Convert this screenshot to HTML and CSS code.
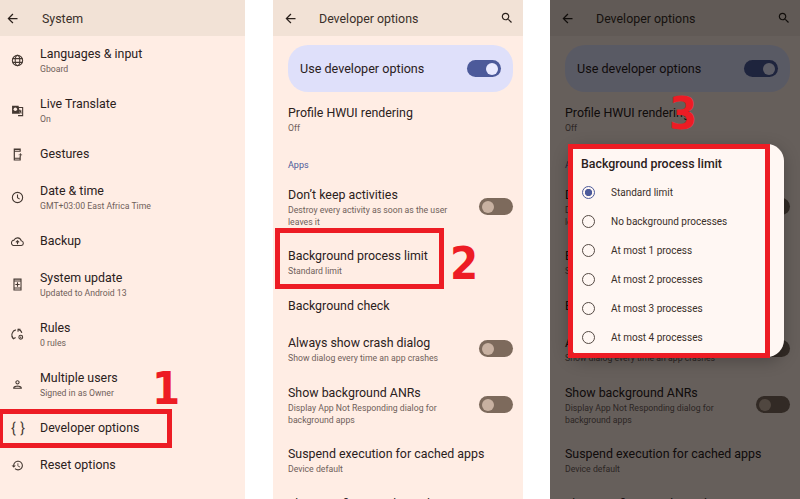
FILE: index.html
```html
<!DOCTYPE html>
<html lang="en">
<head>
<meta charset="utf-8">
<title>Developer options</title>
<link rel="stylesheet" href="styles.css">
</head>
<body>
<svg class="defs" width="0" height="0" aria-hidden="true">
  <symbol id="i-back" viewBox="0 0 24 24"><path d="M20 11H7.83l5.59-5.59L12 4l-8 8 8 8 1.41-1.41L7.83 13H20v-2z"/></symbol>
  <symbol id="i-search" viewBox="0 0 24 24"><path d="M15.5 14h-.79l-.28-.27C15.41 12.59 16 11.11 16 9.5 16 5.91 13.09 3 9.5 3S3 5.91 3 9.5 5.91 16 9.5 16c1.61 0 3.09-.59 4.23-1.57l.27.28v.79l5 4.99L20.49 19l-4.99-5zm-6 0C7.01 14 5 11.99 5 9.5S7.01 5 9.5 5 14 7.01 14 9.5 11.99 14 9.5 14z"/></symbol>
</svg>

<section class="phone phone-narrow">
  <header class="bar">
    <svg class="bar-icon"><use href="#i-back"/></svg>
    <span class="bar-title bar-title-system">System</span>
  </header>
  <div class="row row-2">
    <svg class="icon" viewBox="0 0 24 24"><g class="line"><circle cx="12" cy="12" r="9.5"/><ellipse cx="12" cy="12" rx="4.2" ry="9.5"/><path d="M3 8.5h18M3 15.5h18"/></g></svg>
    <div class="text"><div class="title">Languages &amp; input</div><div class="sub">Gboard</div></div>
  </div>
  <div class="row row-2">
    <svg class="icon" viewBox="0 0 24 24"><g class="line"><path d="M10 6.5h11.5v15H13"/><path d="M16 10.5l3 7M14.5 13h5"/></g><path d="M2 3h12l2.5 15H2z"/><circle class="cut" cx="8" cy="9.5" r="3.2"/></svg>
    <div class="text"><div class="title">Live Translate</div><div class="sub">On</div></div>
  </div>
  <div class="row row-1">
    <svg class="icon" viewBox="0 0 24 24"><path d="M5 1h13v6h-2.2V3.5H7.2V5h8.6v2H7.2v11h8.6v-3H18v8H5zM7.2 20v1h8.6v-1z"/><path d="M16.5 9.5h1.6V12h2.4v1.6h-2.4V16h-1.6v-2.4h-2.4V12h2.4z"/></svg>
    <div class="text"><div class="title">Gestures</div></div>
  </div>
  <div class="row row-2">
    <svg class="icon" viewBox="0 0 24 24"><g class="line"><circle cx="12" cy="12" r="9.5"/><path d="M12 6.5V12.5l4 2.5"/></g></svg>
    <div class="text"><div class="title">Date &amp; time</div><div class="sub">GMT+03:00 East Africa Time</div></div>
  </div>
  <div class="row row-1">
    <svg class="icon" viewBox="0 0 24 24"><g class="line"><path d="M6 19.5a5 5 0 0 1-.4-10A7 7 0 0 1 18.8 10.6a4.5 4.5 0 0 1 .2 8.9z"/><path d="M12 17v-6M9 13.5l3-3 3 3"/></g></svg>
    <div class="text"><div class="title">Backup</div></div>
  </div>
  <div class="row row-2">
    <svg class="icon" viewBox="0 0 24 24"><path d="M4.5 1h15v22h-15zM6.5 3v1.500h11V3zm0 3.500v11h11v-11zm0 13V21h11v-1.500z" fill-rule="evenodd"/><path d="M11 8h2v3h3v2h-3v3h-2v-3H8v-2h3z"/></svg>
    <div class="text"><div class="title">System update</div><div class="sub">Updated to Android 13</div></div>
  </div>
  <div class="row row-2">
    <svg class="icon" viewBox="0 0 24 24"><g class="line"><path d="M9 3.500A9.500 9.500 0 0 0 4 19"/><path d="M1.500 15.500L4.500 20l4-2.500"/><path d="M13 2.500A9 9 0 0 1 20 9"/><path d="M13 7V2.300h4.500"/><circle cx="18" cy="17" r="3.500"/></g><circle cx="18" cy="17" r="1.300"/></svg>
    <div class="text"><div class="title">Rules</div><div class="sub">0 rules</div></div>
  </div>
  <div class="row row-2">
    <svg class="icon" viewBox="0 0 24 24"><path d="M12 6c1.100 0 2 .9 2 2s-.9 2-2 2-2-.9-2-2 .9-2 2-2m0 10c2.700 0 5.800 1.290 6 2H6c.23-.72 3.310-2 6-2m0-12C9.790 4 8 5.790 8 8s1.790 4 4 4 4-1.790 4-4-1.790-4-4-4zm0 10c-2.670 0-8 1.340-8 4v2h16v-2c0-2.660-5.330-4-8-4z"/></svg>
    <div class="text"><div class="title">Multiple users</div><div class="sub">Signed in as Owner</div></div>
  </div>
  <div class="row row-1">
    <span class="icon icon-braces">{ }</span>
    <div class="text"><div class="title">Developer options</div></div>
  </div>
  <div class="row row-1">
    <svg class="icon" viewBox="0 0 24 24"><path d="M13 3c-4.970 0-9 4.030-9 9H1l3.890 3.890.07.14L9 12H6c0-3.870 3.130-7 7-7s7 3.130 7 7-3.130 7-7 7c-1.930 0-3.680-.79-4.940-2.060l-1.420 1.420C8.270 19.990 10.510 21 13 21c4.970 0 9-4.030 9-9s-4.030-9-9-9zm-1 5v5l4.280 2.540.72-1.210-3.500-2.080V8H12z"/></svg>
    <div class="text"><div class="title">Reset options</div></div>
  </div>
  <div class="mark mark-box-1"></div>
  <div class="mark-num mark-num-1">1</div>
</section>

<section class="phone phone-wide">
  <header class="bar">
    <svg class="bar-icon"><use href="#i-back"/></svg>
    <span class="bar-title">Developer options</span>
    <svg class="bar-icon bar-search"><use href="#i-search"/></svg>
  </header>
  <div class="master"><span class="master-label">Use developer options</span><span class="toggle toggle-on"></span></div>
  <div class="row row-2 row-dev"><div class="text"><div class="title">Profile HWUI rendering</div><div class="sub">Off</div></div></div>
  <div class="section">Apps</div>
  <div class="row row-3 row-dev"><div class="text"><div class="title">Don’t keep activities</div><div class="sub">Destroy every activity as soon as the user leaves it</div></div><span class="toggle"></span></div>
  <div class="row row-2 row-dev"><div class="text"><div class="title">Background process limit</div><div class="sub">Standard limit</div></div></div>
  <div class="row row-1 row-dev"><div class="text"><div class="title">Background check</div></div></div>
  <div class="row row-2 row-dev"><div class="text"><div class="title">Always show crash dialog</div><div class="sub">Show dialog every time an app crashes</div></div><span class="toggle"></span></div>
  <div class="row row-3 row-dev"><div class="text"><div class="title">Show background ANRs</div><div class="sub">Display App Not Responding dialog for background apps</div></div><span class="toggle"></span></div>
  <div class="row row-2 row-dev"><div class="text"><div class="title">Suspend execution for cached apps</div><div class="sub">Device default</div></div></div>
  <div class="row row-1 row-dev"><div class="text"><div class="title">Show notification channel warnings</div></div></div>
  <div class="mark mark-box-2"></div>
  <div class="mark-num mark-num-2">2</div>
</section>

<section class="phone phone-wide">
  <header class="bar">
    <svg class="bar-icon"><use href="#i-back"/></svg>
    <span class="bar-title">Developer options</span>
    <svg class="bar-icon bar-search"><use href="#i-search"/></svg>
  </header>
  <div class="master"><span class="master-label">Use developer options</span><span class="toggle toggle-on"></span></div>
  <div class="row row-2 row-dev"><div class="text"><div class="title">Profile HWUI rendering</div><div class="sub">Off</div></div></div>
  <div class="section">Apps</div>
  <div class="row row-3 row-dev"><div class="text"><div class="title">Don’t keep activities</div><div class="sub">Destroy every activity as soon as the user leaves it</div></div><span class="toggle"></span></div>
  <div class="row row-2 row-dev"><div class="text"><div class="title">Background process limit</div><div class="sub">Standard limit</div></div></div>
  <div class="row row-1 row-dev"><div class="text"><div class="title">Background check</div></div></div>
  <div class="row row-2 row-dev"><div class="text"><div class="title">Always show crash dialog</div><div class="sub">Show dialog every time an app crashes</div></div><span class="toggle"></span></div>
  <div class="row row-3 row-dev"><div class="text"><div class="title">Show background ANRs</div><div class="sub">Display App Not Responding dialog for background apps</div></div><span class="toggle"></span></div>
  <div class="row row-2 row-dev"><div class="text"><div class="title">Suspend execution for cached apps</div><div class="sub">Device default</div></div></div>
  <div class="row row-1 row-dev"><div class="text"><div class="title">Show notification channel warnings</div></div></div>
  <div class="scrim"></div>
  <div class="dialog">
    <div class="dialog-title">Background process limit</div>
    <div class="option"><span class="radio radio-on"></span>Standard limit</div>
    <div class="option"><span class="radio"></span>No background processes</div>
    <div class="option"><span class="radio"></span>At most 1 process</div>
    <div class="option"><span class="radio"></span>At most 2 processes</div>
    <div class="option"><span class="radio"></span>At most 3 processes</div>
    <div class="option"><span class="radio"></span>At most 4 processes</div>
  </div>
  <div class="mark mark-box-3"></div>
  <div class="mark-num mark-num-3">3</div>
</section>
</body>
</html>
```

FILE: styles.css
```css
* { box-sizing: border-box; }

html, body { height: 100%; }

body {
  margin: 0;
  display: flex;
  height: 499px;
  overflow: hidden;
  background: #fff;
  font-family: Roboto, "Liberation Sans", sans-serif;
  color: #2b211c;
}

.defs { position: absolute; }

.phone {
  position: relative;
  height: 499px;
  overflow: hidden;
  flex: none;
  background: #ffede4;
}

.phone-narrow { width: 245px; margin-right: 28px; }
.phone-wide { width: 250px; }
.phone-wide + .phone-wide { margin-left: 27px; }

.bar {
  height: 36px;
  display: flex;
  align-items: center;
  background: #f2e2d6;
  padding-left: 5px;
}

.phone-narrow .bar { margin-bottom: -1px; }

.bar-icon { width: 15px; height: 15px; fill: #2b211c; flex: none; }
.bar-title { margin-left: 22px; font-size: 12.4px; color: #3a2f29; }
.phone-wide .bar { padding-left: 10px; }
.phone-wide .bar-title { margin-left: 21px; }
.bar-search { width: 14px; height: 14px; margin-left: auto; margin-right: 9px; }

.row {
  display: flex;
  align-items: center;
  padding-left: 11px;
  padding-right: 10px;
}

.row-1 { height: 37px; }
.row-2 { height: 50px; padding-bottom: 1px; }
.row-3 { height: 61px; }
.row-dev { padding-left: 15px; }

.icon {
  width: 13px;
  height: 13px;
  flex: none;
  margin-top: 2px;
  margin-right: 16px;
  fill: #453932;
}

.line { fill: none; stroke: #453932; stroke-width: 2; }
.cut { fill: #ffede4; }

.icon-braces {
  font-size: 14px;
  line-height: 14px;
  letter-spacing: .5px;
  color: #453932;
  white-space: nowrap;
  margin-top: 0;
}

.text { flex: 1; min-width: 0; }
.title { font-size: 12.4px; line-height: 18px; white-space: nowrap; }
.sub { font-size: 8.7px; line-height: 12px; color: #6f605a; max-width: 180px; }
.row-3 .text { padding-top: 1px; }

.master {
  margin: 9px 10px 2px 15px;
  height: 47px;
  border-radius: 20px;
  background: #dfe0fa;
  display: flex;
  align-items: center;
  justify-content: space-between;
  padding: 0 12px;
}

.master-label { font-size: 12.6px; }

.section {
  height: 32px;
  padding: 15px 0 0 15px;
  font-size: 9px;
  line-height: 12px;
  color: #4c5a9a;
}

.toggle {
  position: relative;
  display: block;
  flex: none;
  width: 34px;
  height: 17px;
  border-radius: 9px;
  background: #7d6a5c;
}

.toggle::after {
  content: "";
  position: absolute;
  left: 3px;
  top: 2.5px;
  width: 12px;
  height: 12px;
  border-radius: 50%;
  background: #c8b1a1;
}

.toggle-on { background: #4c5a9a; }
.toggle-on::after { left: 19px; background: #e8e9ff; }

.scrim {
  position: absolute;
  inset: 0;
  background: rgba(0, 0, 0, .6);
}

.dialog {
  position: absolute;
  left: 18px;
  top: 144px;
  width: 216px;
  height: 213px;
  border-radius: 17px;
  background: #fff7f3;
  padding: 11px 0 0 13px;
  box-shadow: 0 4px 16px rgba(0, 0, 0, .25);
}

.dialog-title { font-size: 12.4px; line-height: 18px; font-weight: 500; margin-bottom: 5px; }

.option {
  display: flex;
  align-items: center;
  height: 29px;
  font-size: 10px;
  color: #3a2f29;
}

.radio {
  width: 13px;
  height: 13px;
  margin-left: 1px;
  margin-right: 16px;
  border: 1.3px solid #554a44;
  border-radius: 50%;
  flex: none;
}

.radio-on {
  border-color: #4c5a9a;
  background: radial-gradient(circle, #4c5a9a 0 3.4px, transparent 3.9px);
}

.mark { position: absolute; border: 5px solid #ed1c24; }
.mark-box-1 { left: -2px; top: 409px; width: 174px; height: 39px; }
.mark-box-2 { left: 2px; top: 228px; width: 169px; height: 61px; }
.mark-box-3 { left: 18px; top: 144px; width: 202px; height: 214px; }

.mark-num {
  position: absolute;
  font-family: "DejaVu Sans Condensed", "DejaVu Sans", sans-serif;
  font-weight: 700;
  font-size: 45px;
  line-height: 46px;
  color: #ed1c24;
}

.mark-num-1 { left: 152px; top: 366px; }
.mark-num-2 { left: 177px; top: 241px; }
.mark-num-3 { left: 119px; top: 91px; }
```
